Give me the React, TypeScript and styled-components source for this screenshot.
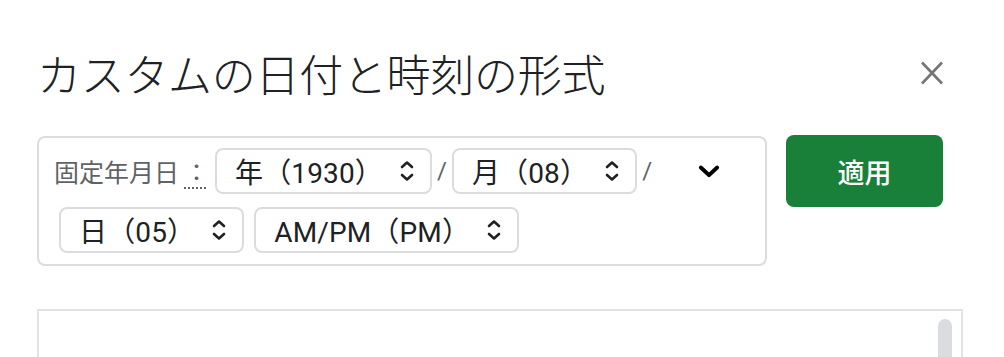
import styled, { createGlobalStyle } from "styled-components";

const GlobalStyle = createGlobalStyle`
  html, body {
    margin: 0;
    padding: 0;
    background: #ffffff;
  }
  body {
    font-family: "Roboto", "Noto Sans CJK JP", sans-serif;
    color: #202124;
  }
`;

interface ChipItem {
  label: string;
  sep?: boolean;
}

const firstRow: ChipItem[] = [
  { label: "年（1930）", sep: true },
  { label: "月（08）", sep: true },
];

const secondRow: ChipItem[] = [{ label: "日（05）" }, { label: "AM/PM（PM）" }];

const UpDownIcon = () => (
  <svg width="14" height="26" viewBox="0 0 14 26" fill="none">
    <path d="M2 9 L7 4.5 L12 9" stroke="#202124" strokeWidth="2.6" strokeLinecap="round" strokeLinejoin="round" />
    <path d="M2 17 L7 21.5 L12 17" stroke="#202124" strokeWidth="2.6" strokeLinecap="round" strokeLinejoin="round" />
  </svg>
);

const Chip = ({ label }: { label: string }) => (
  <ChipBox>
    <ChipText>{label}</ChipText>
    <UpDownIcon />
  </ChipBox>
);

const App = () => {
  return (
    <>
      <GlobalStyle />
      <Page>
        <Header>
          <Title>カスタムの日付と時刻の形式</Title>
          <CloseButton aria-label="閉じる">
            <svg width="24" height="24" viewBox="0 0 24 24" fill="none">
              <path d="M2 1.5 L22 22.5 M22 1.5 L2 22.5" stroke="#757575" strokeWidth="2.6" />
            </svg>
          </CloseButton>
        </Header>

        <FormatRow>
          <OptionsBox>
            <Label>固定年月日</Label>
            <Colon>：</Colon>
            {firstRow.map((item) => (
              <Group key={item.label}>
                <Chip label={item.label} />
                {item.sep && <Slash>/</Slash>}
              </Group>
            ))}
            <MoreButton aria-label="その他">
              <svg width="28" height="28" viewBox="0 0 24 24" fill="none">
                <path d="M5 9 L12 15.5 L19 9" stroke="#000" strokeWidth="3.4" strokeLinecap="round" strokeLinejoin="round" />
              </svg>
            </MoreButton>
            {secondRow.map((item) => (
              <Chip key={item.label} label={item.label} />
            ))}
          </OptionsBox>
          <ApplyButton>適用</ApplyButton>
        </FormatRow>

        <ListBox>
          <ScrollThumb />
        </ListBox>
      </Page>
    </>
  );
};

const Page = styled.div`
  padding: 44px 41px 0 37px;
`;

const Header = styled.div`
  display: flex;
  align-items: center;
  justify-content: space-between;
  height: 58px;
`;

const Title = styled.h1`
  margin: 0;
  font-family: "Noto Sans CJK JP", sans-serif;
  font-size: 44px;
  font-weight: 300;
  line-height: 58px;
  color: #202124;
  letter-spacing: -0.3px;
`;

const CloseButton = styled.button`
  display: flex;
  align-items: center;
  justify-content: center;
  width: 24px;
  height: 24px;
  margin-right: 19px;
  padding: 0;
  border: none;
  background: none;
`;

const FormatRow = styled.div`
  display: flex;
  align-items: flex-start;
  gap: 19px;
  margin-top: 33px;
`;

const OptionsBox = styled.div`
  display: flex;
  flex-wrap: wrap;
  align-items: center;
  row-gap: 13px;
  width: 730px;
  box-sizing: border-box;
  margin-top: 1px;
  padding: 10px 13px 11px 15px;
  border: 2px solid #dadce0;
  border-radius: 8px;
`;

const Label = styled.span`
  font-family: "Noto Sans CJK JP", sans-serif;
  font-size: 25px;
  color: #5f6368;
  line-height: 46px;
`;

const Colon = styled.span`
  width: 27px;
  font-family: "Noto Sans CJK JP", sans-serif;
  font-size: 24px;
  color: #5f6368;
  line-height: 30px;
  text-align: center;
  text-decoration: underline dotted #5f6368;
  text-decoration-thickness: 2px;
  text-underline-offset: 6px;
  margin-left: 4px;
`;

const Group = styled.div`
  display: flex;
  align-items: center;
`;

const ChipBox = styled.div`
  display: inline-flex;
  align-items: center;
  justify-content: space-between;
  gap: 17px;
  height: 46px;
  box-sizing: border-box;
  margin: 0 5px;
  padding: 0 16px 0 18px;
  border: 2px solid #dadce0;
  border-radius: 8px;
`;

const ChipText = styled.span`
  font-family: "Roboto", "Noto Sans CJK JP", sans-serif;
  font-size: 28px;
  font-weight: 400;
  letter-spacing: 0.15px;
  color: #202124;
  white-space: nowrap;
`;

const Slash = styled.span`
  font-family: "Roboto", sans-serif;
  font-size: 24px;
  color: #5f6368;
`;

const MoreButton = styled.button`
  display: flex;
  align-items: center;
  justify-content: center;
  width: 40px;
  height: 40px;
  margin-left: 37px;
  padding: 0;
  border: none;
  background: none;
`;

const ApplyButton = styled.button`
  width: 157px;
  height: 72px;
  border: none;
  border-radius: 8px;
  background: #188038;
  color: #ffffff;
  font-family: "Noto Sans CJK JP", sans-serif;
  font-size: 27px;
  font-weight: 500;
`;

const ListBox = styled.div`
  display: flex;
  justify-content: flex-end;
  height: 80px;
  margin-top: 43px;
  padding: 8px 9px 0 0;
  border: 2px solid #e3e3e3;
  border-bottom: none;
`;

const ScrollThumb = styled.div`
  width: 14px;
  height: 72px;
  border-radius: 7px 7px 0 0;
  background: #dadce0;
`;

export default App;
